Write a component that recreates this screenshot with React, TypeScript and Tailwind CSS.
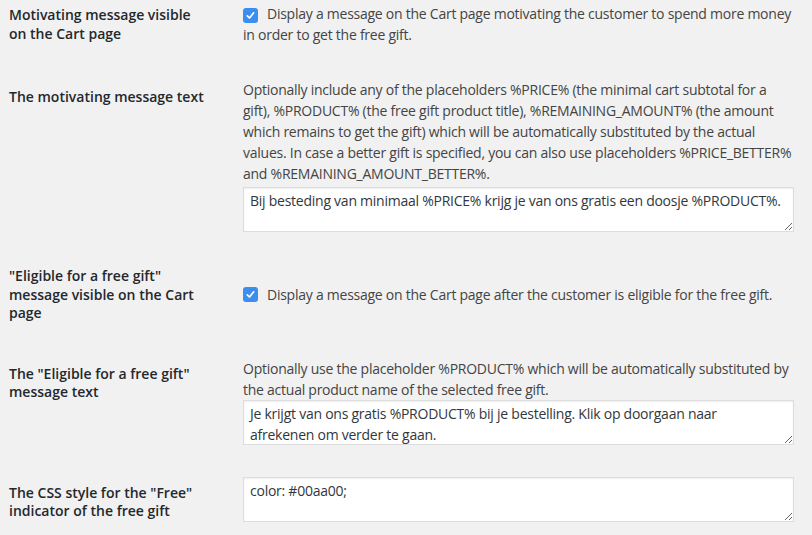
import React from "react";

const font = { fontFamily: '"Open Sans", "Liberation Sans", sans-serif' };

function Check() {
  return (
    <span className="inline-flex w-[15px] h-[15px] shrink-0 items-center justify-center rounded-[3px] bg-[#3b8ef0] mr-[9px] align-[-2px]">
      <svg width="11" height="11" viewBox="0 0 11 11" fill="none">
        <path d="M2.3 5.8 L4.5 8 L8.7 2.8" stroke="white" strokeWidth="1.7" strokeLinecap="round" strokeLinejoin="round" />
      </svg>
    </span>
  );
}

function Area({ value }: { value: string }) {
  return (
    <textarea
      readOnly
      value={value}
      className="block w-[551px] h-[45px] border border-[#dddddd] bg-white pl-[6px] pr-[8px] py-[2px] text-[14px] leading-[21px] tracking-[-0.25px] text-[#32373c] shadow-[inset_0_1px_2px_rgba(0,0,0,0.07)] outline-none resize-y"
      style={font}
    />
  );
}

export default function App() {
  const label = "w-[234px] shrink-0 pr-[34px] text-[14px] leading-[18.5px] font-semibold text-[#23282d]";
  const desc = "w-[549px] text-[14px] leading-[21px] tracking-[-0.25px] text-[#444444]";
  return (
    <div className="w-[812px] h-[535px] overflow-hidden bg-[#f1f1f1] pl-[9px]" style={font}>
      <div className="mt-[-14px] flex">
        <div className={label + " pt-[20px] pb-[25px]"}>Motivating message visible on the Cart page</div>
        <div className="self-center py-[15px] mt-[-6px]">
          <div className={desc + " w-[554px]"}>
            <Check />
            Display a message on the Cart page motivating the customer to spend more money in order to get the free gift.
          </div>
        </div>
      </div>

      <div className="flex">
        <div className={label + " pt-[20px]"}>The motivating message text</div>
        <div className="pt-[11px] pb-[15px]">
          <div className={desc + " leading-[21.5px]"}>
            Optionally include any of the placeholders %PRICE% (the minimal cart subtotal for a gift), %PRODUCT% (the free gift product title), %REMAINING_AMOUNT% (the amount which remains to get the gift) which will be automatically substituted by the actual values. In case a better gift is specified, you can also use placeholders %PRICE_BETTER% and %REMAINING_AMOUNT_BETTER%.
          </div>
          <div className="mt-[3px]">
            <Area value="Bij besteding van minimaal %PRICE% krijg je van ons gratis een doosje %PRODUCT%." />
          </div>
        </div>
      </div>

      <div className="flex">
        <div className={label + " pt-[20px] pb-[20px]"}>"Eligible for a free gift" message visible on the Cart page</div>
        <div className="self-center py-[15px]">
          <div className={desc + " w-[554px] flex items-center"}>
            <Check />
            Display a message on the Cart page after the customer is eligible for the free gift.
          </div>
        </div>
      </div>

      <div className="flex">
        <div className={label + " pt-[22px]"}>The "Eligible for a free gift" message text</div>
        <div className="pt-[15px] pb-[17px]">
          <div className={desc + " w-[554px]"}>
            Optionally use the placeholder %PRODUCT% which will be automatically substituted by the actual product name of the selected free gift.
          </div>
          <Area value={"Je krijgt van ons gratis %PRODUCT% bij je bestelling. Klik op doorgaan naar\nafrekenen om verder te gaan."} />
        </div>
      </div>

      <div className="flex">
        <div className={label + " pt-[22px]"}>The CSS style for the "Free" indicator of the free gift</div>
        <div className="pt-[15px]">
          <Area value="color: #00aa00;" />
        </div>
      </div>
    </div>
  );
}
